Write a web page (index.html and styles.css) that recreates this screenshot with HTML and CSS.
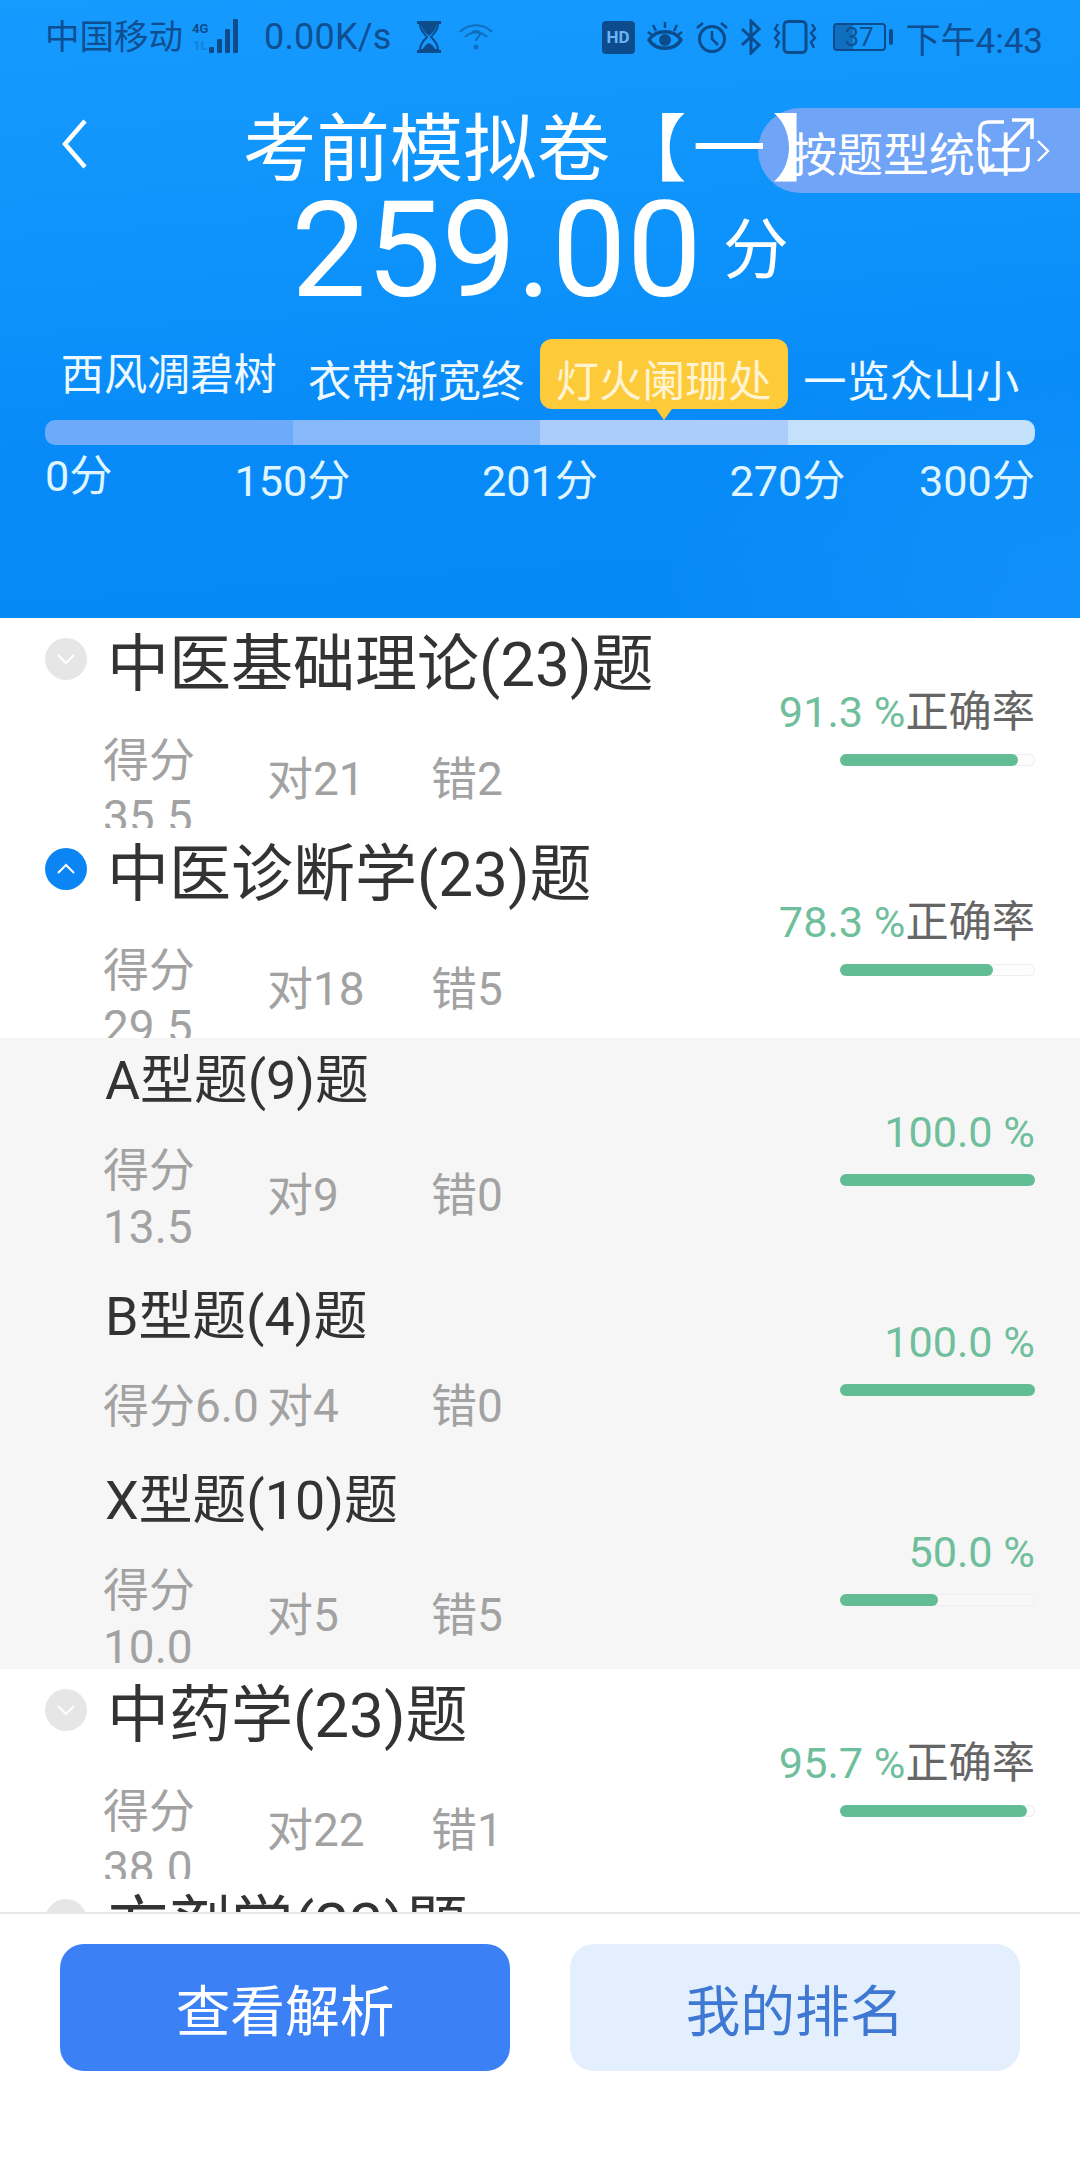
FILE: index.html
```html
<!DOCTYPE html>
<html lang="zh-CN">
<head>
<meta charset="utf-8">
<title>考前模拟卷</title>
<link rel="stylesheet" href="styles.css">
</head>
<body>
<div class="app">
  <header class="hero">
    <div class="status">
      <div class="status-left">
        <span class="carrier">中国移动</span>
        <svg class="ic-signal" viewBox="0 0 52 36" width="52" height="36"><text x="0" y="14" class="net">4G</text><text x="1" y="31" class="net net-dim">1L</text><g fill="#0d4c8c"><rect x="17" y="28" width="5" height="6" rx="1"/><rect x="25" y="20" width="5" height="14" rx="1"/><rect x="33" y="10" width="5" height="24" rx="1"/><rect x="41" y="0" width="5" height="34" rx="1"/></g></svg>
        <span class="speed">0.00K/s</span>
        <svg class="ic-glass" viewBox="0 0 26 32" width="26" height="32"><path d="M1 1.5h24M1 30.5h24" stroke="#0d4c8c" stroke-width="3"/><path d="M4 3h18c0 7-5 10-7 13 2 2 7 6 7 13H4c0-7 5-11 7-13C9 13 4 10 4 3z" fill="none" stroke="#0d4c8c" stroke-width="2"/><path d="M5 3h16c-1 6-5 9-8 12-3-3-7-6-8-12zM7 28c1-3 4-5 6-6 2 1 5 3 6 6z" fill="#0d4c8c"/></svg>
        <svg class="ic-wifi" viewBox="0 0 34 28" width="34" height="28"><g fill="none" stroke="#0d4c8c" stroke-width="2" opacity=".55"><path d="M1 9c9-9 23-9 32 0"/><path d="M6 14c6-6 16-6 22 0"/><path d="M13 11c0-4 8-4 8 0 0 3-4 3-4 7"/></g><circle cx="17" cy="24" r="2.5" fill="#0d4c8c" opacity=".55"/></svg>
      </div>
      <div class="status-right">
        <span class="hd">HD</span>
        <svg class="ic-eye" viewBox="0 0 36 32" width="36" height="32"><path d="M2 19c7-11 25-11 32 0-7 11-25 11-32 0z" fill="none" stroke="#0d4c8c" stroke-width="3.5"/><circle cx="18" cy="19" r="6" fill="#0d4c8c"/><path d="M18 1v6M6 4l3 6M30 4l-3 6M1 11l4 3M35 11l-4 3" stroke="#0d4c8c" stroke-width="2.5"/></svg>
        <svg class="ic-alarm" viewBox="0 0 32 32" width="32" height="32"><circle cx="16" cy="18" r="12.5" fill="none" stroke="#0d4c8c" stroke-width="3"/><path d="M16 10v8l6 6M1 7l6-5M31 7l-6-5" fill="none" stroke="#0d4c8c" stroke-width="2.6"/></svg>
        <svg class="ic-bt" viewBox="0 0 22 36" width="22" height="36"><path d="M2 10l17 16-8 8V2l8 8L2 26" fill="none" stroke="#0d4c8c" stroke-width="3"/></svg>
        <svg class="ic-vib" viewBox="0 0 44 34" width="44" height="34"><rect x="11" y="1.5" width="22" height="31" rx="4" fill="none" stroke="#0d4c8c" stroke-width="3"/><path d="M5 4L2 9l4 4-4 5 4 4-3 6M39 4l3 5-4 4 4 5-4 4 3 6" fill="none" stroke="#0d4c8c" stroke-width="2.4"/></svg>
        <div class="battery"><div class="battery-body"><span class="battery-fill"></span><span class="battery-num">37</span></div><span class="battery-nub"></span></div>
        <span class="clock">下午4:43</span>
      </div>
    </div>

    <div class="nav">
      <svg class="back" viewBox="0 0 25 50" width="25" height="50"><path d="M23 2L3 25l20 23" fill="none" stroke="#fff" stroke-width="4.5"/></svg>
      <h1 class="title">考前模拟卷<span class="title-tail">【一】</span></h1>
    </div>
    <a class="pill">
      <span class="pill-text">按题型统计</span>
      <svg class="pill-go" viewBox="0 0 14 22" width="14" height="22"><path d="M2 1l10 10L2 21" fill="none" stroke="#fff" stroke-width="2.4"/></svg>
      <svg class="pill-share" viewBox="0 0 56 56" width="56" height="56"><path d="M26 5H10C5 5 2 8 2 13v32c0 5 3 8 8 8h32c5 0 8-3 8-8V30" fill="none" stroke="#fff" stroke-width="3.6"/><path d="M24 33L53 3M34 3h20v19" fill="none" stroke="#fff" stroke-width="3.6"/></svg>
    </a>

    <div class="score"><span class="score-num">259.00</span><span class="score-unit">分</span></div>

    <div class="levels">
      <span class="level level-first">西风凋碧树</span>
      <span class="level">衣带渐宽终</span>
      <span class="level level-on">灯火阑珊处</span>
      <span class="level">一览众山小</span>
    </div>
    <div class="scale">
      <span class="seg seg-1"></span><span class="seg seg-2"></span><span class="seg seg-3"></span><span class="seg seg-4"></span>
    </div>
    <div class="marks">
      <span class="mark mark-first">0分</span>
      <span class="mark">150分</span>
      <span class="mark">201分</span>
      <span class="mark">270分</span>
      <span class="mark mark-last">300分</span>
    </div>
  </header>

  <main class="list">
    <section class="row">
      <div class="row-inner">
        <div class="row-left">
          <div class="head"><span class="toggle"><svg viewBox="0 0 20 12" width="20" height="12"><path d="M2 2l8 8 8-8" fill="none" stroke="#fff" stroke-width="2"/></svg></span><h2 class="name">中医基础理论(23)题</h2></div>
          <div class="stats"><span class="stat">得分35.5</span><span class="stat">对21</span><span class="stat">错2</span></div>
        </div>
        <div class="row-right">
          <div class="pct">91.3 %<span class="pct-label">正确率</span></div>
          <div class="track"><div class="fill" style="width:91.3%"></div></div>
        </div>
      </div>
    </section>
    <section class="row">
      <div class="row-inner">
        <div class="row-left">
          <div class="head"><span class="toggle toggle-on"><svg viewBox="0 0 20 12" width="20" height="12"><path d="M2 10l8-8 8 8" fill="none" stroke="#fff" stroke-width="2"/></svg></span><h2 class="name">中医诊断学(23)题</h2></div>
          <div class="stats"><span class="stat">得分29.5</span><span class="stat">对18</span><span class="stat">错5</span></div>
        </div>
        <div class="row-right">
          <div class="pct">78.3 %<span class="pct-label">正确率</span></div>
          <div class="track"><div class="fill" style="width:78.3%"></div></div>
        </div>
      </div>
    </section>

    <div class="subs">
      <section class="sub">
        <div class="row-left">
          <h3 class="sub-name">A型题(9)题</h3>
          <div class="stats stats-sub"><span class="stat">得分13.5</span><span class="stat">对9</span><span class="stat">错0</span></div>
        </div>
        <div class="row-right">
          <div class="pct">100.0 %</div>
          <div class="track"><div class="fill" style="width:100%"></div></div>
        </div>
      </section>
      <section class="sub sub-short">
        <div class="row-left">
          <h3 class="sub-name">B型题(4)题</h3>
          <div class="stats stats-sub"><span class="stat">得分6.0</span><span class="stat">对4</span><span class="stat">错0</span></div>
        </div>
        <div class="row-right">
          <div class="pct">100.0 %</div>
          <div class="track"><div class="fill" style="width:100%"></div></div>
        </div>
      </section>
      <section class="sub">
        <div class="row-left">
          <h3 class="sub-name">X型题(10)题</h3>
          <div class="stats stats-sub"><span class="stat">得分10.0</span><span class="stat">对5</span><span class="stat">错5</span></div>
        </div>
        <div class="row-right">
          <div class="pct">50.0 %</div>
          <div class="track"><div class="fill" style="width:50%"></div></div>
        </div>
      </section>
    </div>

    <section class="row">
      <div class="row-inner">
        <div class="row-left">
          <div class="head"><span class="toggle"><svg viewBox="0 0 20 12" width="20" height="12"><path d="M2 2l8 8 8-8" fill="none" stroke="#fff" stroke-width="2"/></svg></span><h2 class="name">中药学(23)题</h2></div>
          <div class="stats"><span class="stat">得分38.0</span><span class="stat">对22</span><span class="stat">错1</span></div>
        </div>
        <div class="row-right">
          <div class="pct">95.7 %<span class="pct-label">正确率</span></div>
          <div class="track"><div class="fill" style="width:95.7%"></div></div>
        </div>
      </div>
    </section>
    <section class="row">
      <div class="row-inner">
        <div class="row-left">
          <div class="head"><span class="toggle"></span><h2 class="name">方剂学(23)题</h2></div>
        </div>
      </div>
    </section>
  </main>

  <footer class="foot">
    <button class="btn btn-primary">查看解析</button>
    <button class="btn btn-soft">我的排名</button>
  </footer>
</div>
</body>
</html>
```
FILE: styles.css
```css
* { box-sizing: border-box; }
html, body { margin: 0; padding: 0; background: #fff; }
body { font-family: "Roboto", "Noto Sans CJK SC", sans-serif; }
.app { width: 1080px; height: 2160px; display: flex; flex-direction: column; overflow: hidden; }

.hero {
  position: relative;
  flex: 0 0 618px;
  color: #fff;
  background:
    radial-gradient(ellipse 420px 300px at 1080px 620px, rgba(40, 160, 255, .35), rgba(40, 160, 255, 0) 100%),
    linear-gradient(176deg, #169afe 0%, #1095fc 30%, #088bf8 65%, #0688f7 100%);
}

.status { height: 74px; padding: 0 37px 0 45px; display: flex; justify-content: space-between; align-items: center; color: #0f4f91; font-size: 34.5px; }
.status-left, .status-right { display: flex; align-items: center; }
.carrier { line-height: 40px; }
.ic-signal { margin-left: 9px; }
.net { font: 700 13px "Roboto", sans-serif; fill: #0d4c8c; }
.net-dim { opacity: .3; }
.speed { margin-left: 20px; font-size: 36px; letter-spacing: .2px; }
.ic-glass { margin-left: 24px; }
.ic-wifi { margin-left: 17px; }
.hd { width: 33px; height: 33px; background: #0d4c8c; border-radius: 4px; color: #6bb5f5; font: 700 17px/33px "Roboto", sans-serif; text-align: center; }
.ic-eye { margin-left: 12px; }
.ic-alarm { margin-left: 13px; }
.ic-bt { margin-left: 12px; }
.ic-vib { margin-left: 11px; }
.battery { margin-left: 16px; display: flex; align-items: center; }
.battery-body { position: relative; width: 53px; height: 28px; border: 2px solid #0d4c8c; border-radius: 4px; text-align: center; font: 26px/24px "Roboto", sans-serif; color: #0f4f91; overflow: hidden; }
.battery-fill { position: absolute; left: 0; top: 0; bottom: 0; width: 37%; background: rgba(13, 76, 140, .55); }
.battery-num { position: relative; }
.battery-nub { width: 4px; height: 16px; margin-left: 3px; background: #0d4c8c; border-radius: 2px; }
.clock { margin-left: 13px; font-size: 35px; }

.nav { height: 80px; margin-top: 36px; padding-left: 62px; display: flex; align-items: center; position: relative; z-index: 2; }
.back { flex: none; margin-top: -12px; }
.title { margin: 0 0 0 156px; font-size: 73.44px; line-height: 80px; font-weight: 400; white-space: nowrap; }
.title-tail { margin-left: 3px; letter-spacing: 6px; }

.pill { position: absolute; z-index: 1; left: 758px; right: 0; top: 108px; height: 85px; padding-left: 33px; background: #70a4f7; border-radius: 43px 0 0 43px; display: flex; align-items: center; font-size: 46px; }
.pill-text { white-space: nowrap; }
.pill-go { margin-left: 15px; }
.pill-share { position: absolute; left: 220px; top: 9px; }

.score { height: 120px; margin-top: 1px; display: flex; justify-content: center; align-items: center; gap: 21px; }
.score-num { font-size: 133.5px; line-height: 120px; }
.score-unit { font-size: 66px; line-height: 80px; }

.levels { margin: 28px 45px 11px; display: grid; grid-template-columns: repeat(4, 1fr); align-items: end; }
.level { display: block; text-align: center; font-size: 43.2px; line-height: 52px; white-space: nowrap; color: #eef9ff; }
.level-first { margin-bottom: 7px; }
.level-on { position: relative; padding-top: 18px; background: #fdca3a; border-radius: 12px; color: #fff3d0; }
.level-on::after { content: ""; position: absolute; left: 50%; top: 100%; margin-left: -8px; border: 8px solid transparent; border-top: 11px solid #fdca3a; border-bottom: 0; }

.scale { margin: 0 45px; height: 25px; display: grid; grid-template-columns: repeat(4, 1fr); border-radius: 10px; overflow: hidden; }
.seg-1 { background: #6eaafa; }
.seg-2 { background: #87b9fa; }
.seg-3 { background: #aacdfc; }
.seg-4 { background: #c3e1fa; }

.marks { margin: 7px 45px 0; display: grid; grid-template-columns: 123.75px repeat(3, 247.5px) 123.75px; font-size: 43.2px; line-height: 60px; color: #dff5ff; }
.mark { text-align: center; white-space: nowrap; }
.mark-first { text-align: left; margin-top: -5px; }
.mark-last { text-align: right; }

.list { flex: 1; min-height: 0; overflow: hidden; background: #fff; }
.row { height: 210px; overflow: hidden; }
.row-inner { height: 236px; display: flex; align-items: center; justify-content: space-between; }
.row-left { align-self: flex-start; flex: 1; min-width: 0; }
.row-right { flex: none; width: 300px; margin-right: 45px; padding-bottom: 23px; display: flex; flex-direction: column; align-items: flex-end; }

.head { display: flex; align-items: flex-start; padding-left: 45px; }
.toggle { flex: none; width: 42px; height: 42px; margin-top: 20px; border-radius: 50%; background: #e6e6e6; display: flex; align-items: center; justify-content: center; }
.toggle-on { background: #0b84f4; }
.name { margin: 12px 0 0 20px; font-size: 62px; line-height: 70px; font-weight: 400; color: #333; white-space: nowrap; }

.stats { margin-top: 31.5px; padding-left: 103px; display: flex; align-items: center; }
.stats-sub { margin-top: 25.5px; }
.stat { flex: none; width: 164px; font-size: 46px; line-height: 57px; color: #a2a2a2; }
.stat + .stat { margin-top: -18px; }
.stats-sub .stat + .stat { margin-top: -6px; }
.sub-short .stats-sub .stat + .stat { margin-top: 0; }

.pct { font-size: 43.2px; line-height: 60px; color: #6fbe9c; white-space: nowrap; }
.pct-label { color: #666; }
.track { width: 195px; height: 12px; margin-top: 11px; box-shadow: inset 0 0 0 1px #eee; border-radius: 6px; background: #fdfdfd; }
.fill { height: 12px; border-radius: 6px; background: #62bd94; }

.subs { height: 631px; overflow: hidden; background: #f6f6f6; }
.sub { height: 236px; display: flex; align-items: center; justify-content: space-between; }
.sub-short { height: 184px; }
.sub .row-right { padding-bottom: 24px; }
.sub .track { background: #f8f8f8; }
.sub-name { margin: 8px 0 0 105px; font-size: 53.8px; line-height: 70px; font-weight: 400; color: #333; white-space: nowrap; }

.foot { flex: 0 0 248px; border-top: 2px solid #e8e8e8; background: #fff; padding: 30px 60px 0; display: flex; justify-content: space-between; align-items: flex-start; }
.btn { width: 450px; height: 127px; padding: 0; border: 0; border-radius: 24px; font-family: inherit; font-size: 54.7px; }
.btn-primary { background: #3b81f5; color: #fff; }
.btn-soft { background: #e3effd; color: #3f78d2; }
```
